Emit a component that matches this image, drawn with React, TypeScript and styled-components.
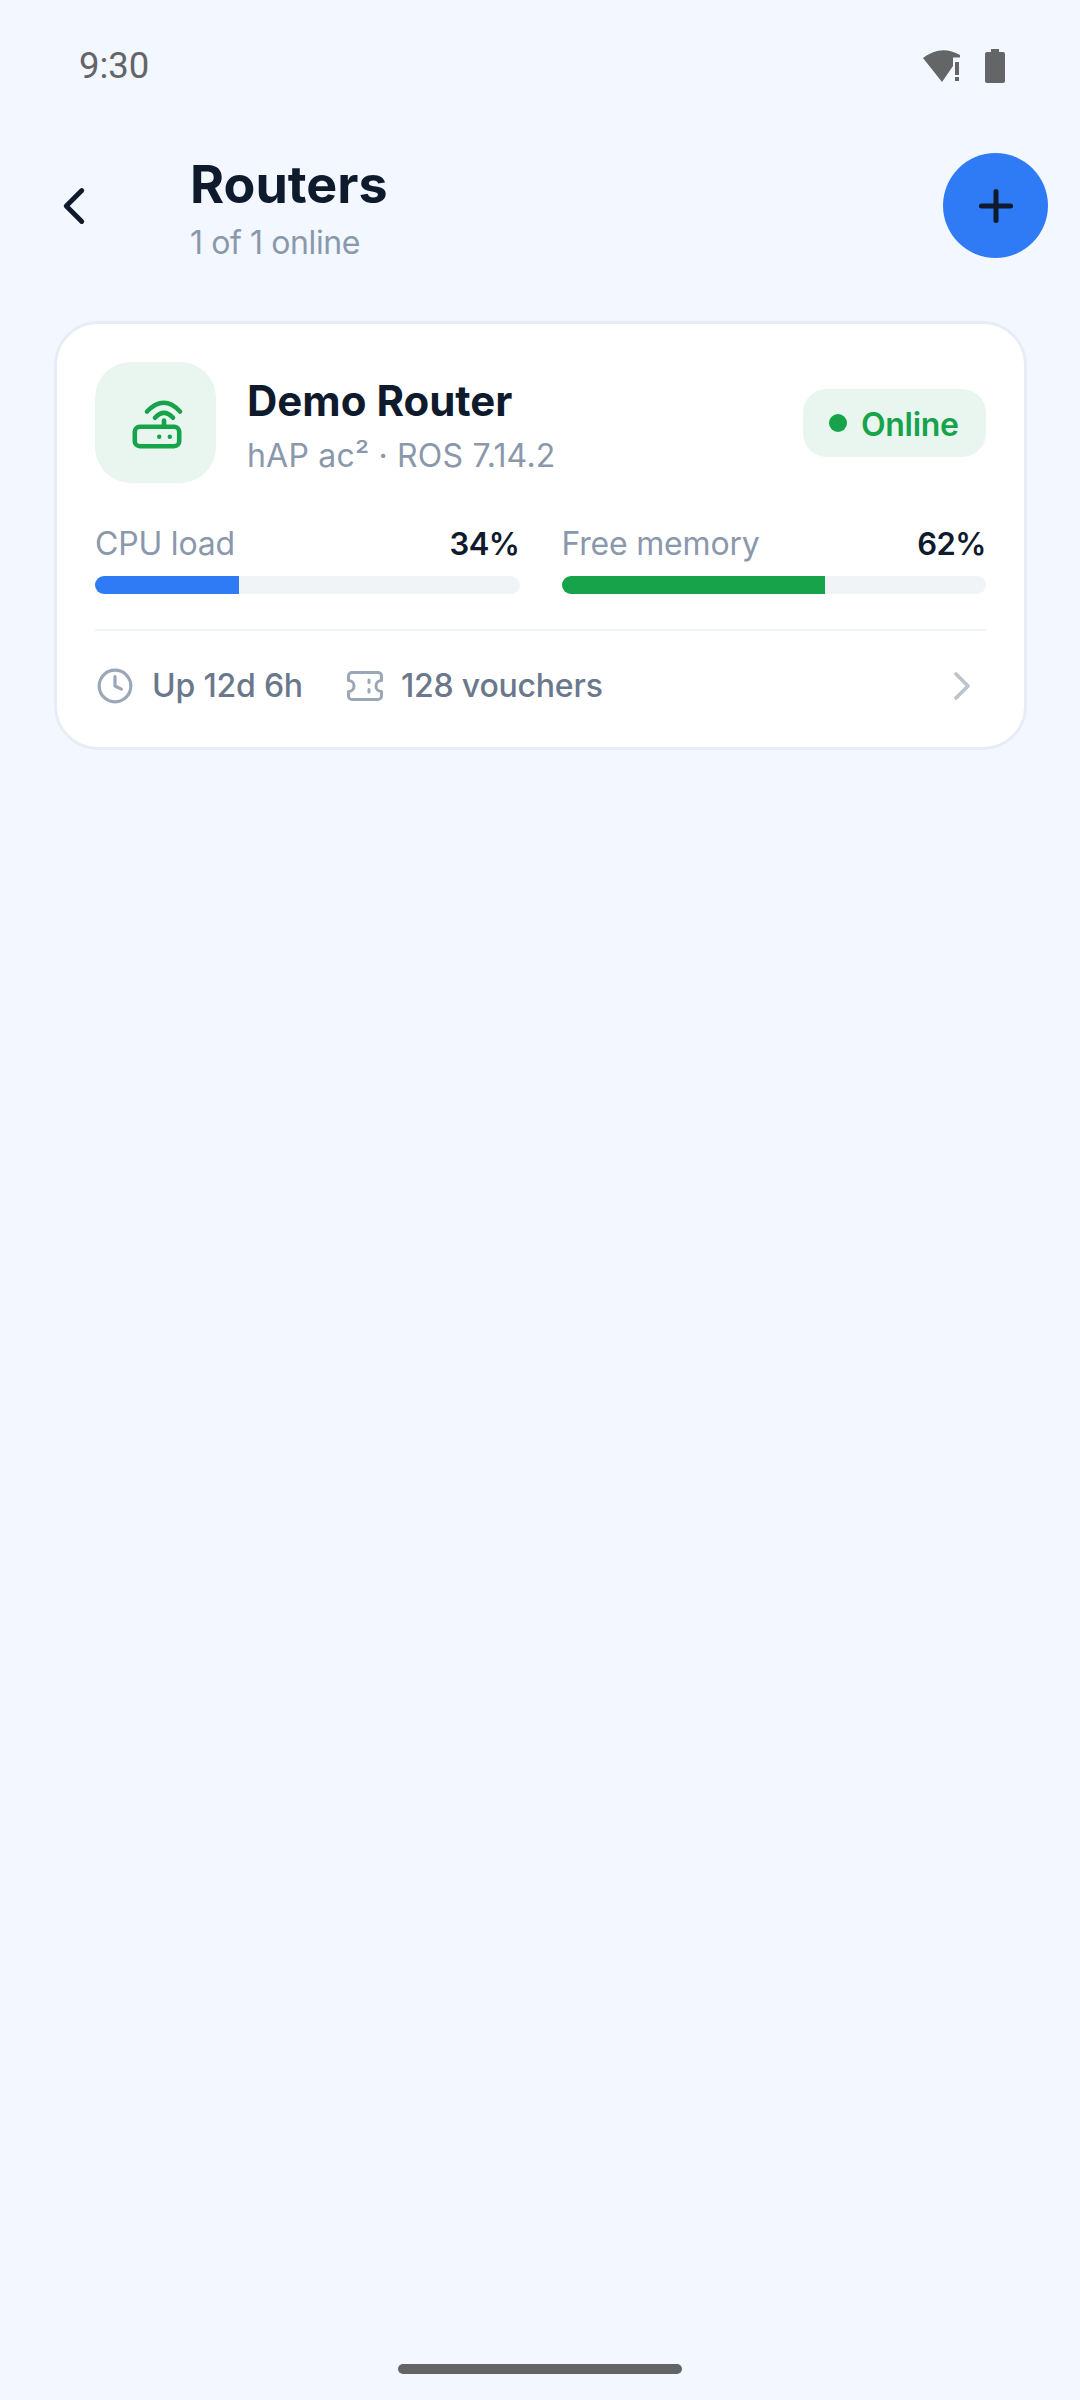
import React from "react";
import styled, { createGlobalStyle } from "styled-components";
import { ChevronLeft, ChevronRight, Clock, Plus } from "lucide-react";

const Global = createGlobalStyle`
  html, body { margin: 0; padding: 0; background: #f3f7ff; }
  * { box-sizing: border-box; }
`;

const Screen = styled.div`
  width: 1080px;
  height: 2400px;
  display: flex;
  flex-direction: column;
  background: #f3f7ff;
  font-family: "Inter", "Liberation Sans", sans-serif;
  overflow: hidden;
`;

const StatusBar = styled.div`
  height: 153px;
  flex: none;
  display: flex;
  align-items: flex-start;
  justify-content: space-between;
  padding: 45px 75px 0 79px;
`;

const Time = styled.span`
  font-family: "Roboto", sans-serif;
  font-size: 36.5px;
  line-height: 42px;
  color: #636567;
`;

const StatusIcons = styled.div`
  display: flex;
  align-items: flex-start;
  gap: 24px;
  padding-top: 4px;
`;

const Header = styled.header`
  height: 105px;
  flex: none;
  display: flex;
  align-items: center;
  padding: 0 32px 0 38px;
`;

const BackButton = styled.div`
  width: 72px;
  height: 72px;
  flex: none;
  margin-right: 80px;
  display: flex;
  align-items: center;
  justify-content: center;
  color: #0f1b2d;
`;

const TitleBlock = styled.div`
  flex: 1;
  display: flex;
  flex-direction: column;
  gap: 10px;
  padding-top: 8px;
`;

const Title = styled.h1`
  margin: 0;
  font-size: 52px;
  line-height: 56px;
  font-weight: 700;
  color: #0f1b2d;
`;

const Subtitle = styled.div`
  font-size: 32px;
  line-height: 40px;
  letter-spacing: -0.4px;
  color: #8a98ab;
`;

const Fab = styled.div`
  width: 105px;
  height: 105px;
  flex: none;
  border-radius: 50%;
  background: #2f7bf6;
  color: #0f1b2d;
  display: flex;
  align-items: center;
  justify-content: center;
`;

const Card = styled.section`
  width: 973px;
  height: 429px;
  margin: 63px 0 0 54px;
  flex: none;
  padding: 38px 38px 0;
  background: #fff;
  border: 3px solid #e8edf5;
  border-radius: 44px;
  display: flex;
  flex-direction: column;
`;

const TopRow = styled.div`
  display: flex;
  align-items: center;
`;

const IconBox = styled.div`
  width: 121px;
  height: 121px;
  flex: none;
  margin-right: 31px;
  border-radius: 36px;
  background: #e8f6ef;
  display: flex;
  align-items: center;
  justify-content: center;
`;

const RouterInfo = styled.div`
  flex: 1;
  display: flex;
  flex-direction: column;
  gap: 10px;
  padding-top: 6px;
`;

const RouterName = styled.div`
  font-size: 42px;
  line-height: 50px;
  font-weight: 700;
  color: #0f1b2d;
`;

const RouterModel = styled.div`
  font-size: 32px;
  line-height: 40px;
  letter-spacing: 0.2px;
  color: #8a98ab;
`;

const Badge = styled.div`
  width: 183px;
  height: 68px;
  border-radius: 24px;
  background: #e8f6ef;
  padding: 4px 0 0 26px;
  display: flex;
  align-items: center;
  gap: 14px;
  color: #16a34a;
  font-size: 32px;
  font-weight: 600;
  letter-spacing: -0.3px;
`;

const Dot = styled.span`
  width: 18px;
  height: 18px;
  margin-top: -4px;
  border-radius: 50%;
  background: #16a34a;
`;

const Metrics = styled.div`
  display: grid;
  grid-template-columns: 1fr 1fr;
  gap: 42px;
  margin-top: 40px;
`;

const Metric = styled.div`
  display: flex;
  flex-direction: column;
`;

const MetricHead = styled.div`
  display: flex;
  justify-content: space-between;
  align-items: center;
  height: 40px;
  margin-bottom: 13px;
`;

const MetricLabel = styled.span`
  font-size: 32px;
  letter-spacing: -0.2px;
  color: #8a98ab;
`;

const MetricValue = styled.span`
  font-size: 31px;
  font-weight: 600;
  letter-spacing: -0.5px;
  color: #0f1b2d;
`;

const Track = styled.div`
  height: 18px;
  border-radius: 9px;
  background: #f1f4f7;
  overflow: hidden;
`;

const Fill = styled.div<{ $color: string }>`
  height: 100%;
  background: ${(p) => p.$color};
`;

const Divider = styled.div`
  height: 2px;
  margin-top: 35px;
  background: #f0f3f7;
`;

const Footer = styled.div`
  display: flex;
  align-items: center;
  flex: 1;
  padding-left: 1px;
  padding-bottom: 7px;
`;

const Stat = styled.div`
  display: flex;
  align-items: center;
  gap: 18px;
  margin-right: 44px;
  color: #6b788c;
  font-size: 32px;
  font-weight: 500;
  letter-spacing: -0.2px;
`;

const StatIcon = styled.span`
  display: flex;
  color: #9aa7b6;
`;

const Chevron = styled.div`
  margin-left: auto;
  display: flex;
  color: #bcc4cc;
`;

const HomeBar = styled.div`
  width: 284px;
  height: 10px;
  flex: none;
  margin: auto auto 26px;
  border-radius: 5px;
  background: #626466;
`;

const metrics = [
  { label: "CPU load", value: 34, color: "#2f7bf6" },
  { label: "Free memory", value: 62, color: "#16a34a" },
];

export default function App() {
  return (
    <Screen>
      <Global />
      <StatusBar>
        <Time>9:30</Time>
        <StatusIcons>
          <svg width="38" height="34" viewBox="0 0 38 34" fill="#636567">
            <path d="M0 9Q18 -5 37 6V8.5H30V17L19 33Z" />
            <rect x="32" y="13" width="4" height="13" />
            <rect x="32" y="28" width="4" height="4" />
          </svg>
          <svg width="20" height="34" viewBox="0 0 20 34" fill="#636567">
            <path d="M6 0H14V3H18A2 2 0 0 1 20 5V32A2 2 0 0 1 18 34H2A2 2 0 0 1 0 32V5A2 2 0 0 1 2 3H6Z" />
          </svg>
        </StatusIcons>
      </StatusBar>
      <Header>
        <BackButton>
          <ChevronLeft size={62} strokeWidth={1.9} />
        </BackButton>
        <TitleBlock>
          <Title>Routers</Title>
          <Subtitle>1 of 1 online</Subtitle>
        </TitleBlock>
        <Fab>
          <Plus size={50} strokeWidth={2.4} />
        </Fab>
      </Header>
      <Card>
        <TopRow>
          <IconBox>
            <svg width="60" height="60" viewBox="0 0 60 60" fill="none" stroke="#16a34a" strokeWidth="4.6" strokeLinecap="round" strokeLinejoin="round">
              <rect x="8.8" y="33.8" width="44.4" height="19.4" rx="5" />
              <path d="M38 27.5V33.8" />
              <path d="M21 18.5Q38 1 54 18.5" />
              <path d="M29 24.8Q38 15 47 24.8" />
              <circle cx="33.2" cy="43.8" r="2.2" fill="#16a34a" stroke="none" />
              <circle cx="43.8" cy="43.8" r="2.2" fill="#16a34a" stroke="none" />
            </svg>
          </IconBox>
          <RouterInfo>
            <RouterName>Demo Router</RouterName>
            <RouterModel>hAP ac² · ROS 7.14.2</RouterModel>
          </RouterInfo>
          <Badge>
            <Dot />
            Online
          </Badge>
        </TopRow>
        <Metrics>
          {metrics.map((m) => (
            <Metric key={m.label}>
              <MetricHead>
                <MetricLabel>{m.label}</MetricLabel>
                <MetricValue>{m.value}%</MetricValue>
              </MetricHead>
              <Track>
                <Fill $color={m.color} style={{ width: `${m.value}%` }} />
              </Track>
            </Metric>
          ))}
        </Metrics>
        <Divider />
        <Footer>
          <Stat>
            <StatIcon>
              <Clock size={38} strokeWidth={2} />
            </StatIcon>
            Up 12d 6h
          </Stat>
          <Stat>
            <StatIcon>
              <svg width="36" height="30" viewBox="0 0 36 30" fill="none" stroke="currentColor" strokeWidth="3" strokeLinecap="round" strokeLinejoin="round">
                <path d="M5 1.5H31A3.5 3.5 0 0 1 34.5 5V9.5A5.5 5.5 0 0 0 34.5 20.5V25A3.5 3.5 0 0 1 31 28.5H5A3.5 3.5 0 0 1 1.5 25V20.5A5.5 5.5 0 0 0 1.5 9.5V5A3.5 3.5 0 0 1 5 1.5Z" />
                <path d="M22 9V11.5" />
                <path d="M22 18.5V21" />
              </svg>
            </StatIcon>
            128 vouchers
          </Stat>
          <Chevron>
            <ChevronRight size={48} strokeWidth={1.9} />
          </Chevron>
        </Footer>
      </Card>
      <HomeBar />
    </Screen>
  );
}
